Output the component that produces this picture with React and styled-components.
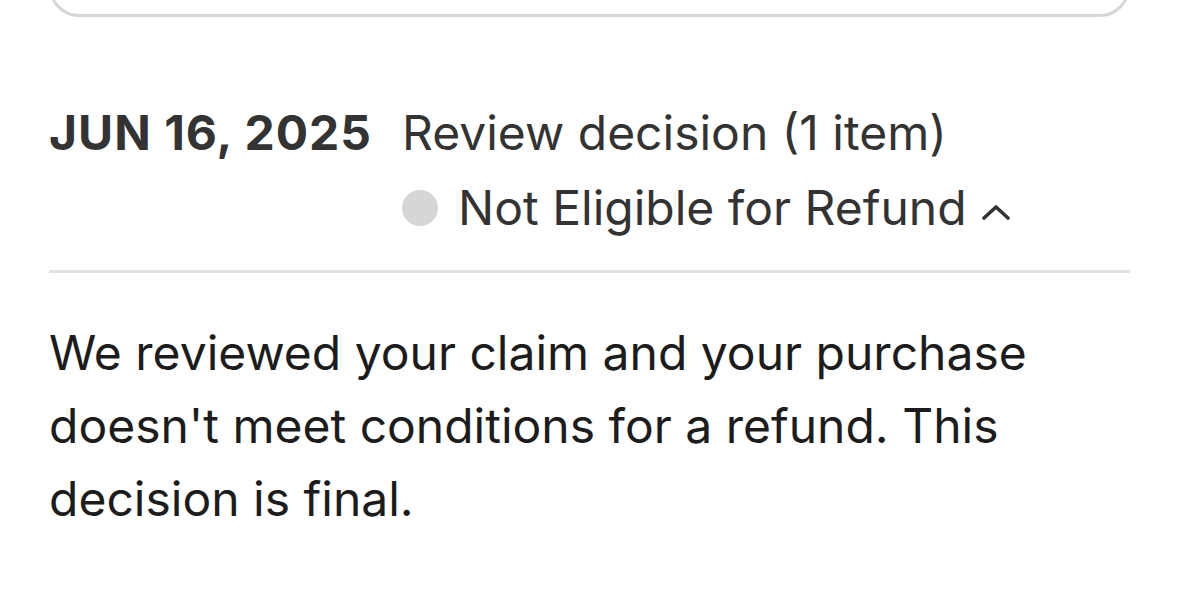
import React from "react";
import styled, { createGlobalStyle } from "styled-components";

const GlobalStyle = createGlobalStyle`
  html, body {
    margin: 0;
    padding: 0;
    background: #fff;
  }
  body {
    font-family: Inter, "Noto Sans", "Liberation Sans", sans-serif;
    -webkit-font-smoothing: antialiased;
    overflow: hidden;
  }
`;

const Page = styled.div`
  width: 1179px;
  height: 602px;
  overflow: hidden;
`;

const PrevCard = styled.div`
  height: 80px;
  margin: -63px 49px 0 49px;
  border: 3px solid #d6d6d6;
  border-radius: 30px;
  box-sizing: border-box;
`;

const Section = styled.section`
  padding: 0 49px;
  margin-top: 78px;
`;

const Header = styled.div`
  display: flex;
  align-items: flex-start;
`;

const DateLabel = styled.div`
  width: 353px;
  flex: none;
  font-size: 48px;
  line-height: 75px;
  font-weight: 700;
  letter-spacing: 1px;
  color: #333;
`;

const Summary = styled.div`
  display: flex;
  flex-direction: column;
`;

const Title = styled.div`
  font-size: 48px;
  line-height: 75px;
  color: #333;
`;

const Status = styled.button`
  display: flex;
  align-items: center;
  padding: 0;
  border: 0;
  background: none;
  font: inherit;
  font-size: 48px;
  line-height: 75px;
  color: #333;
  cursor: pointer;
`;

const Dot = styled.span`
  width: 36px;
  height: 36px;
  border-radius: 50%;
  background: ${(p) => p.color};
  margin-right: 20px;
  flex: none;
`;

const Chevron = styled.svg`
  margin-left: 15px;
  margin-top: 8px;
`;

const Divider = styled.hr`
  margin: 25px 0 0 0;
  border: 0;
  height: 3px;
  background: #e2e2e2;
`;

const Body = styled.p`
  margin: 43px 0 0 0;
  font-size: 48px;
  line-height: 73px;
  color: #1c1c1c;
  max-width: 1000px;
`;

export default function App() {
  return (
    <Page>
      <GlobalStyle />
      <PrevCard />
      <Section>
        <Header>
          <DateLabel>JUN 16, 2025</DateLabel>
          <Summary>
            <Title>Review decision (1 item)</Title>
            <Status>
              <Dot color="#d6d6d6" />
              Not Eligible for Refund
              <Chevron width="28" height="16" viewBox="0 0 28 16" fill="none">
                <polyline
                  points="2,14 14,3 26,14"
                  stroke="#333"
                  strokeWidth="3.6"
                  strokeLinecap="round"
                  strokeLinejoin="round"
                />
              </Chevron>
            </Status>
          </Summary>
        </Header>
        <Divider />
        <Body>
          We reviewed your claim and your purchase doesn't meet conditions for
          a refund. This decision is final.
        </Body>
      </Section>
    </Page>
  );
}
